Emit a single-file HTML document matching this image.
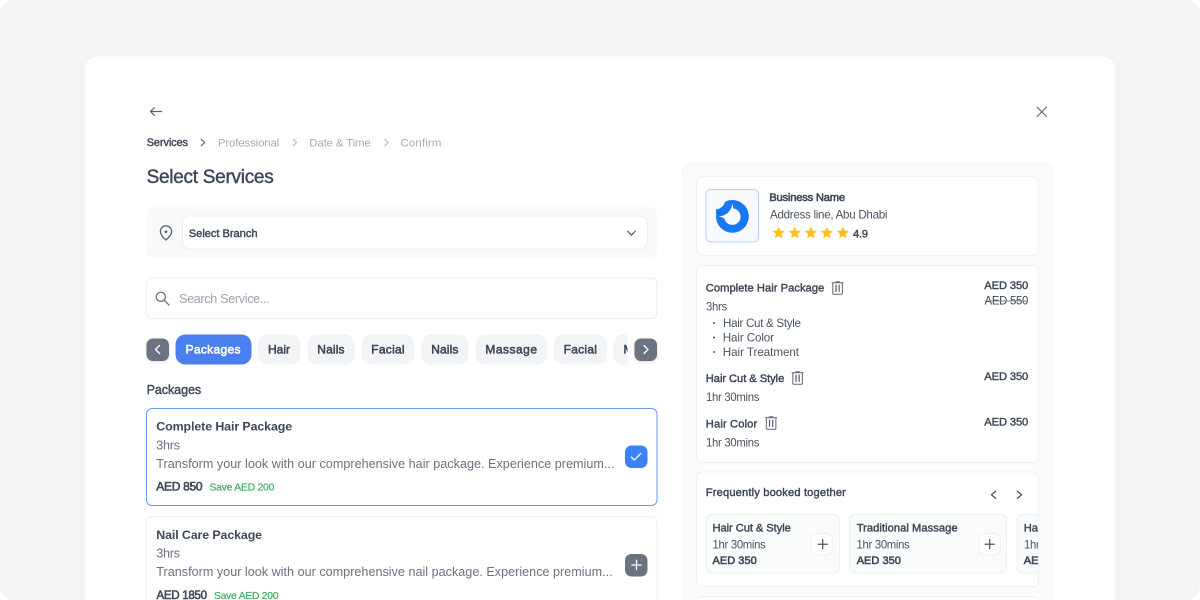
<!DOCTYPE html>
<html lang="en">
<head>
<meta charset="utf-8">
<title>Select Services</title>
<style>
*{box-sizing:border-box;margin:0;padding:0}
html,body{width:1200px;height:600px;overflow:hidden;background:#fff}
body{font-family:"Liberation Sans",sans-serif;position:relative}
.stage{position:absolute;left:0;top:0;width:1200px;height:600px;background:#f3f4f6;border-radius:14px;overflow:hidden}
.x2{position:absolute;left:0;top:0;width:2400px;height:1200px;transform:scale(.5);transform-origin:0 0;will-change:transform}
.abs{position:absolute}
.tx{position:absolute;white-space:nowrap;line-height:40px;height:40px}
.m{-webkit-text-stroke:0.85px currentColor}
.s{-webkit-text-stroke:1.15px currentColor}
.l{-webkit-text-stroke:0.45px currentColor}
.b{font-weight:bold}
svg{position:absolute;overflow:visible}
</style>
</head>
<body>
<div class="stage"><div class="x2">
<!-- modal -->
<div class="abs" style="left:169.6px;top:113.2px;width:2060.4px;height:1200px;background:#fff;border-radius:26px"></div>

<!-- back arrow -->
<svg style="left:298px;top:210.6px" width="28" height="24" viewBox="0 0 14 12" fill="none" stroke="#5b6372" stroke-width="1.2" stroke-linecap="round" stroke-linejoin="round"><path d="M12.7 6H1.5M5.5 2L1.5 6L5.5 10"/></svg>
<!-- close -->
<svg style="left:2073.4px;top:212.8px" width="21.2" height="21.2" viewBox="0 0 10.6 10.6" fill="none" stroke="#5f6775" stroke-width="1.1" stroke-linecap="round"><path d="M0.6 0.6L10 10M10 0.6L0.6 10"/></svg>

<!-- breadcrumb chevrons -->
<svg style="left:401.4px;top:276.8px" width="10" height="16" viewBox="0 0 5 8" fill="none" stroke="#5b6372" stroke-width="1.1" stroke-linecap="round" stroke-linejoin="round"><path d="M0.8 0.8L4.1 4L0.8 7.2"/></svg>
<svg style="left:585px;top:276.8px" width="10" height="16" viewBox="0 0 5 8" fill="none" stroke="#b4b9c1" stroke-width="1.1" stroke-linecap="round" stroke-linejoin="round"><path d="M0.8 0.8L4.1 4L0.8 7.2"/></svg>
<svg style="left:768px;top:276.8px" width="10" height="16" viewBox="0 0 5 8" fill="none" stroke="#b4b9c1" stroke-width="1.1" stroke-linecap="round" stroke-linejoin="round"><path d="M0.8 0.8L4.1 4L0.8 7.2"/></svg>

<!-- branch select -->
<div class="abs" style="left:293px;top:414px;width:1021.2px;height:102px;background:#f8f9fb;border-radius:14px"></div>
<div class="abs" style="left:364px;top:431px;width:932px;height:68px;background:#fff;border:2px solid #eceff2;border-radius:16px"></div>
<svg style="left:317.8px;top:449.6px" width="28" height="32" viewBox="0 0 14 16" fill="none" stroke="#5b6372" stroke-width="1.3" stroke-linejoin="round"><path d="M7 15C7 15 12.6 10.4 12.6 6.4A5.6 5.6 0 0 0 1.4 6.4C1.4 10.4 7 15 7 15Z"/><circle cx="7" cy="6.7" r="1.35" fill="#5b6372" stroke="none"/></svg>
<svg style="left:1253.8px;top:460.6px" width="17.8" height="10.8" viewBox="0 0 8.9 5.4" fill="none" stroke="#4b5563" stroke-width="1.2" stroke-linecap="round" stroke-linejoin="round"><path d="M0.6 0.6L4.45 4.7L8.3 0.6"/></svg>

<!-- search -->
<div class="abs" style="left:292px;top:555px;width:1023px;height:83px;background:#fff;border:2px solid #e9eef0;border-radius:12px"></div>
<svg style="left:310px;top:582px" width="30" height="30" viewBox="0 0 15 15" fill="none" stroke="#667080" stroke-width="1.25" stroke-linecap="round"><circle cx="5.8" cy="5.8" r="4.6"/><path d="M9.3 9.3L14 14"/></svg>

<!-- chips -->
<div class="abs" style="left:351px;top:669px;width:904px;height:60px;overflow:hidden">
  <div class="abs" style="left:0;top:0;width:152px;height:60px;background:#4a80ee;border-radius:20px"></div>
  <div class="abs" style="left:165px;top:0;width:85px;height:60px;background:#f3f4f6;border-radius:20px"></div>
  <div class="abs" style="left:264px;top:0;width:94px;height:60px;background:#f3f4f6;border-radius:20px"></div>
  <div class="abs" style="left:372px;top:0;width:106px;height:60px;background:#f3f4f6;border-radius:20px"></div>
  <div class="abs" style="left:491.6px;top:0;width:94.8px;height:60px;background:#f3f4f6;border-radius:20px"></div>
  <div class="abs" style="left:600.4px;top:0;width:142.6px;height:60px;background:#f3f4f6;border-radius:20px"></div>
  <div class="abs" style="left:756.4px;top:0;width:106.6px;height:60px;background:#f3f4f6;border-radius:20px"></div>
  <div class="abs" style="left:876.4px;top:0;width:140px;height:60px;background:#f3f4f6;border-radius:20px"></div>
  <span class="tx s" style="left:896px;top:10.4px;font-size:24px;color:#414a5a">Massage</span>
</div>
<!-- chip nav buttons -->
<div class="abs" style="left:293px;top:677px;width:45px;height:45px;background:#6b7280;border-radius:13px;box-shadow:0 2px 6px rgba(0,0,0,.15)"></div>
<svg style="left:309px;top:689px" width="12" height="20" viewBox="0 0 6 10" fill="none" stroke="#fff" stroke-width="1.4" stroke-linecap="round" stroke-linejoin="round"><path d="M5 1L1 5L5 9"/></svg>
<div class="abs" style="left:1269px;top:677px;width:45px;height:45px;background:#6b7280;border-radius:13px;box-shadow:0 2px 6px rgba(0,0,0,.15)"></div>
<svg style="left:1286px;top:689px" width="12" height="20" viewBox="0 0 6 10" fill="none" stroke="#fff" stroke-width="1.4" stroke-linecap="round" stroke-linejoin="round"><path d="M1 1L5 5L1 9"/></svg>

<!-- card 1 -->
<div class="abs" style="left:292px;top:816px;width:1023px;height:196px;background:#fff;border:2px solid #6b9af0;border-radius:12px"></div>
<div class="abs" style="left:1250px;top:891px;width:45px;height:45px;background:#3b82f6;border-radius:13px"></div>
<svg style="left:1261px;top:904px" width="24" height="18" viewBox="0 0 12 9" fill="none" stroke="#fff" stroke-width="1.3" stroke-linecap="round" stroke-linejoin="round"><path d="M0.9 5.1L3.8 8.1L10.3 1.5"/></svg>
<!-- card 2 -->
<div class="abs" style="left:292px;top:1031.6px;width:1023px;height:222px;background:#fff;border:2px solid #eef1f3;border-radius:12px"></div>
<div class="abs" style="left:1250px;top:1107.6px;width:45px;height:45px;background:#6b7280;border-radius:13px"></div>
<svg style="left:1261.6px;top:1119.2px" width="22" height="22" viewBox="0 0 11 11" fill="none" stroke="#fff" stroke-width="1.3" stroke-linecap="round"><path d="M5.5 0.8V10.2M0.8 5.5H10.2"/></svg>

<!-- right panel -->
<div class="abs" style="left:1364.4px;top:326.8px;width:741.6px;height:1000px;background:#fafbfb;border:2px solid #f5f7f8;border-radius:16px"></div>
<!-- business card -->
<div class="abs" style="left:1391.6px;top:351.6px;width:686px;height:160px;background:#fff;border:2px solid #eef1f3;border-radius:12px"></div>
<div class="abs" style="left:1411px;top:378px;width:107px;height:107px;background:#f7f9fc;border:2px solid #b9cff8;border-radius:10px"></div>
<svg style="left:1431.8px;top:399.6px" width="65.6" height="65.6" viewBox="0 0 100 100"><path fill="#1877f2" d="M27 5.6A50 50 0 1 1 0.4 44L0 28.5A29 29 0 0 0 27 5.6Z"/><path fill="#f7f9fc" d="M49.6 9Q50.8 20 54.6 26.4A25 25 0 1 1 25.6 56.6Q17 51.5 7.5 50A42 42 0 0 0 49.6 9Z"/></svg>
<!-- stars -->
<svg style="left:1544.6px;top:453.2px" width="159" height="24.48" viewBox="0 0 78 12" fill="#fcc117"><path transform="translate(0 0)" d="M6 0.3L7.7 4.1L11.8 4.5L8.7 7.3L9.6 11.4L6 9.3L2.4 11.4L3.3 7.3L0.2 4.5L4.3 4.1Z"/><path transform="translate(15.8 0)" d="M6 0.3L7.7 4.1L11.8 4.5L8.7 7.3L9.6 11.4L6 9.3L2.4 11.4L3.3 7.3L0.2 4.5L4.3 4.1Z"/><path transform="translate(31.6 0)" d="M6 0.3L7.7 4.1L11.8 4.5L8.7 7.3L9.6 11.4L6 9.3L2.4 11.4L3.3 7.3L0.2 4.5L4.3 4.1Z"/><path transform="translate(47.3 0)" d="M6 0.3L7.7 4.1L11.8 4.5L8.7 7.3L9.6 11.4L6 9.3L2.4 11.4L3.3 7.3L0.2 4.5L4.3 4.1Z"/><path transform="translate(63.1 0)" d="M6 0.3L7.7 4.1L11.8 4.5L8.7 7.3L9.6 11.4L6 9.3L2.4 11.4L3.3 7.3L0.2 4.5L4.3 4.1Z"/></svg>

<!-- items card -->
<div class="abs" style="left:1391.6px;top:529.6px;width:686px;height:396.4px;background:#fff;border:2px solid #eef1f3;border-radius:12px"></div>
<svg style="left:1662.8px;top:561.6px" width="24.4" height="28" viewBox="0 0 12.2 14" fill="none" stroke="#5f6775" stroke-linecap="round" stroke-linejoin="round"><path stroke-width="1" d="M0.5 1.8H11.7M1.3 1.8V12.3Q1.3 13.3 2.3 13.3H9.9Q10.9 13.3 10.9 12.3V1.8"/><path stroke-width="1.1" d="M4.4 0.8H7.8"/><path stroke-width="1.3" d="M4.55 4.2V10.4M7.65 4.2V10.4"/></svg>
<svg style="left:1583.4px;top:742.2px" width="24.4" height="28" viewBox="0 0 12.2 14" fill="none" stroke="#5f6775" stroke-linecap="round" stroke-linejoin="round"><path stroke-width="1" d="M0.5 1.8H11.7M1.3 1.8V12.3Q1.3 13.3 2.3 13.3H9.9Q10.9 13.3 10.9 12.3V1.8"/><path stroke-width="1.1" d="M4.4 0.8H7.8"/><path stroke-width="1.3" d="M4.55 4.2V10.4M7.65 4.2V10.4"/></svg>
<svg style="left:1530.4px;top:832.4px" width="24.4" height="28" viewBox="0 0 12.2 14" fill="none" stroke="#5f6775" stroke-linecap="round" stroke-linejoin="round"><path stroke-width="1" d="M0.5 1.8H11.7M1.3 1.8V12.3Q1.3 13.3 2.3 13.3H9.9Q10.9 13.3 10.9 12.3V1.8"/><path stroke-width="1.1" d="M4.4 0.8H7.8"/><path stroke-width="1.3" d="M4.55 4.2V10.4M7.65 4.2V10.4"/></svg>
<!-- bullets -->
<div class="abs" style="left:1426.4px;top:644.2px;width:4px;height:4px;border-radius:2px;background:#4b5563"></div>
<div class="abs" style="left:1426.4px;top:673.2px;width:4px;height:4px;border-radius:2px;background:#4b5563"></div>
<div class="abs" style="left:1426.4px;top:702px;width:4px;height:4px;border-radius:2px;background:#4b5563"></div>

<!-- frequently booked together -->
<div class="abs" style="left:1391.6px;top:943px;width:686px;height:230.8px;background:#fff;border:2px solid #eef1f3;border-radius:12px;overflow:hidden">
  <div class="abs" style="left:17px;top:83.2px;width:269.6px;height:119.2px;background:#fafbfb;border:2px solid #eef1f3;border-radius:12px"></div>
  <div class="abs" style="left:304.8px;top:83.2px;width:316px;height:119.2px;background:#fafbfb;border:2px solid #eef1f3;border-radius:12px"></div>
  <div class="abs" style="left:639px;top:83.2px;width:270px;height:119.2px;background:#fafbfb;border:2px solid #eef1f3;border-radius:12px"></div>
  <div class="abs" style="left:227.8px;top:120.6px;width:45.6px;height:45.6px;background:#fdfdfe;border:2px solid #eef1f3;border-radius:13px"></div>
  <div class="abs" style="left:562.4px;top:120.6px;width:45.6px;height:45.6px;background:#fdfdfe;border:2px solid #eef1f3;border-radius:13px"></div>
</div>
<svg style="left:1634.8px;top:1078px" width="20.8" height="20.8" viewBox="0 0 10.4 10.4" fill="none" stroke="#4b5563" stroke-width="1.25" stroke-linecap="round"><path d="M5.2 0.65V9.75M0.65 5.2H9.75"/></svg>
<svg style="left:1969.2px;top:1078px" width="20.8" height="20.8" viewBox="0 0 10.4 10.4" fill="none" stroke="#4b5563" stroke-width="1.25" stroke-linecap="round"><path d="M5.2 0.65V9.75M0.65 5.2H9.75"/></svg>
<svg style="left:1980.6px;top:981.4px" width="12" height="17.2" viewBox="0 0 6 8.6" fill="none" stroke="#4b5563" stroke-width="1.3" stroke-linecap="round" stroke-linejoin="round"><path d="M5.2 0.7L0.9 4.3L5.2 7.9"/></svg>
<svg style="left:2033px;top:981.4px" width="12" height="17.2" viewBox="0 0 6 8.6" fill="none" stroke="#4b5563" stroke-width="1.3" stroke-linecap="round" stroke-linejoin="round"><path d="M0.8 0.7L5.1 4.3L0.8 7.9"/></svg>

<!-- next card (peeking) -->
<div class="abs" style="left:1391.6px;top:1191.6px;width:686px;height:122px;background:#fff;border:2px solid #eef1f3;border-radius:12px"></div>

<span class="tx m" style="left:293.4px;top:265.12px;font-size:21.9px;letter-spacing:-0.19px;color:#3f4859;">Services</span>
<span class="tx" style="left:435.8px;top:265.2px;font-size:22.8px;letter-spacing:-0.25px;color:#a4aab4;">Professional</span>
<span class="tx" style="left:618.6px;top:265.2px;font-size:22.8px;letter-spacing:-0.25px;color:#a4aab4;">Date &amp; Time</span>
<span class="tx" style="left:801px;top:265.2px;font-size:22.8px;letter-spacing:0.31px;color:#a4aab4;">Confirm</span>
<span class="tx m" style="left:293.2px;top:332.5px;font-size:38.1px;letter-spacing:-0.58px;color:#3f4859;">Select Services</span>
<span class="tx m" style="left:377.6px;top:447.18px;font-size:22.3px;letter-spacing:-0.11px;color:#3f4859;">Select Branch</span>
<span class="tx" style="left:357.6px;top:576.82px;font-size:25.6px;letter-spacing:-0.64px;color:#9ca3af;transform:scaleX(0.9823);transform-origin:0 50%;">Search Service...</span>
<span class="tx s" style="left:371px;top:679.38px;font-size:24px;letter-spacing:0.66px;color:#ffffff;">Packages</span>
<span class="tx s" style="left:536px;top:679.38px;font-size:24px;letter-spacing:-0.01px;color:#414a5a;">Hair</span>
<span class="tx s" style="left:634.6px;top:679.38px;font-size:24px;letter-spacing:0.26px;color:#414a5a;">Nails</span>
<span class="tx s" style="left:742.6px;top:679.38px;font-size:24px;letter-spacing:0.51px;color:#414a5a;">Facial</span>
<span class="tx s" style="left:862.4px;top:679.38px;font-size:24px;letter-spacing:0.26px;color:#414a5a;">Nails</span>
<span class="tx s" style="left:970.8px;top:679.38px;font-size:24px;letter-spacing:0.97px;color:#414a5a;">Massage</span>
<span class="tx s" style="left:1127.2px;top:679.38px;font-size:24px;letter-spacing:0.55px;color:#414a5a;">Facial</span>
<span class="tx m" style="left:293.2px;top:759.2px;font-size:25.1px;letter-spacing:-0.15px;color:#414a5a;">Packages</span>
<span class="tx b" style="left:312.6px;top:833.1px;font-size:24.8px;letter-spacing:-0.2px;color:#3f4859;">Complete Hair Package</span>
<span class="tx" style="left:312.6px;top:869.56px;font-size:25.2px;letter-spacing:-0.53px;color:#6b7280;">3hrs</span>
<span class="tx" style="left:312.6px;top:906.96px;font-size:25.2px;letter-spacing:0.04px;color:#6b7280;">Transform your look with our comprehensive hair package. Experience premium...</span>
<span class="tx s" style="left:312.6px;top:953.38px;font-size:24px;letter-spacing:-0.58px;color:#3f4859;">AED 850</span>
<span class="tx l" style="left:419.2px;top:954.38px;font-size:21.1px;letter-spacing:-0.53px;color:#41b164;transform:scaleX(0.9877);transform-origin:0 50%;">Save AED 200</span>
<span class="tx b" style="left:312.6px;top:1049.7px;font-size:24.8px;letter-spacing:-0.22px;color:#3f4859;">Nail Care Package</span>
<span class="tx" style="left:312.6px;top:1085.96px;font-size:25.2px;letter-spacing:-0.53px;color:#6b7280;">3hrs</span>
<span class="tx" style="left:312.6px;top:1123.16px;font-size:25.2px;letter-spacing:0.03px;color:#6b7280;">Transform your look with our comprehensive nail package. Experience premium...</span>
<span class="tx s" style="left:312.6px;top:1170.38px;font-size:24px;letter-spacing:-0.6px;color:#3f4859;transform:scaleX(0.9600);transform-origin:0 50%;">AED 1850</span>
<span class="tx l" style="left:427.6px;top:1171.38px;font-size:21.1px;letter-spacing:-0.53px;color:#41b164;transform:scaleX(0.9816);transform-origin:0 50%;">Save AED 200</span>
<span class="tx s" style="left:1538.6px;top:375.04px;font-size:22.4px;letter-spacing:-0.44px;color:#3f4859;">Business Name</span>
<span class="tx" style="left:1540px;top:408.62px;font-size:23.6px;letter-spacing:-0.59px;color:#4b5563;transform:scaleX(0.9838);transform-origin:0 50%;">Address line, Abu Dhabi</span>
<span class="tx m" style="left:1706px;top:446.94px;font-size:22.7px;letter-spacing:-0.57px;color:#3f4859;transform:scaleX(0.9860);transform-origin:0 50%;">4.9</span>
<span class="tx m" style="left:1411.6px;top:556.28px;font-size:22.3px;letter-spacing:0.07px;color:#3f4859;">Complete Hair Package</span>
<span class="tx m" style="left:1968.6px;top:551.28px;font-size:22.3px;letter-spacing:-0.23px;color:#3f4859;">AED 350</span>
<span class="tx" style="left:1968.6px;top:580.96px;font-size:23.2px;letter-spacing:-0.58px;color:#3f4859;text-decoration:line-through;text-decoration-color:#7d8491;transform:scaleX(0.9828);transform-origin:0 50%;">AED 550</span>
<span class="tx" style="left:1411.6px;top:593.16px;font-size:23.2px;letter-spacing:-0.58px;color:#4b5563;transform:scaleX(0.9773);transform-origin:0 50%;">3hrs</span>
<span class="tx" style="left:1445.6px;top:626.36px;font-size:23.2px;letter-spacing:-0.58px;color:#4b5563;transform:scaleX(0.9983);transform-origin:0 50%;">Hair Cut &amp; Style</span>
<span class="tx" style="left:1445.6px;top:655.36px;font-size:23.2px;letter-spacing:-0.22px;color:#4b5563;">Hair Color</span>
<span class="tx" style="left:1445.6px;top:684.16px;font-size:23.2px;letter-spacing:-0.07px;color:#4b5563;">Hair Treatment</span>
<span class="tx m" style="left:1411.6px;top:737.28px;font-size:22.3px;letter-spacing:-0.11px;color:#3f4859;">Hair Cut &amp; Style</span>
<span class="tx m" style="left:1968.6px;top:732.88px;font-size:22.3px;letter-spacing:-0.23px;color:#3f4859;">AED 350</span>
<span class="tx" style="left:1411.6px;top:773.76px;font-size:23.2px;letter-spacing:-0.58px;color:#4b5563;transform:scaleX(0.9754);transform-origin:0 50%;">1hr 30mins</span>
<span class="tx m" style="left:1411.6px;top:828.08px;font-size:22.3px;letter-spacing:0.28px;color:#3f4859;">Hair Color</span>
<span class="tx m" style="left:1968.6px;top:823.88px;font-size:22.3px;letter-spacing:-0.23px;color:#3f4859;">AED 350</span>
<span class="tx" style="left:1411.6px;top:864.56px;font-size:23.2px;letter-spacing:-0.58px;color:#4b5563;transform:scaleX(0.9754);transform-origin:0 50%;">1hr 30mins</span>
<span class="tx m" style="left:1411.6px;top:965.08px;font-size:22.3px;letter-spacing:0.3px;color:#3f4859;">Frequently booked together</span>
<span class="tx" style="left:1425px;top:1068.96px;font-size:23.2px;letter-spacing:-0.58px;color:#4b5563;transform:scaleX(0.9735);transform-origin:0 50%;">1hr 30mins</span>
<span class="tx s" style="left:1425px;top:1100.98px;font-size:22px;letter-spacing:0.06px;color:#3f4859;">AED 350</span>
<span class="tx" style="left:1713.4px;top:1068.96px;font-size:23.2px;letter-spacing:-0.58px;color:#4b5563;transform:scaleX(0.9735);transform-origin:0 50%;">1hr 30mins</span>
<span class="tx s" style="left:1713.4px;top:1100.98px;font-size:22px;letter-spacing:0.06px;color:#3f4859;">AED 350</span>
<span class="tx m" style="left:1425px;top:1036.48px;font-size:22.3px;letter-spacing:-0.13px;color:#3f4859;">Hair Cut &amp; Style</span>
<span class="tx m" style="left:1713.4px;top:1036.48px;font-size:22.3px;letter-spacing:0.1px;color:#3f4859;">Traditional Massage</span>
<div class="abs" style="left:2000px;top:1030px;width:75.6px;height:116px;overflow:hidden"><span class="tx m" style="left:47.6px;top:6.48px;font-size:22.3px;letter-spacing:-0.13px;color:#3f4859;">Hair Cut &amp; Style</span></div>
<div class="abs" style="left:2000px;top:1030px;width:75.6px;height:116px;overflow:hidden"><span class="tx" style="left:47.6px;top:38.96px;font-size:23.2px;letter-spacing:-0.58px;color:#4b5563;transform:scaleX(0.9735);transform-origin:0 50%;">1hr 30mins</span></div>
<div class="abs" style="left:2000px;top:1030px;width:75.6px;height:116px;overflow:hidden"><span class="tx s" style="left:47.6px;top:70.98px;font-size:22px;letter-spacing:0.06px;color:#3f4859;">AED 350</span></div>
</div></div>
</body>
</html>
